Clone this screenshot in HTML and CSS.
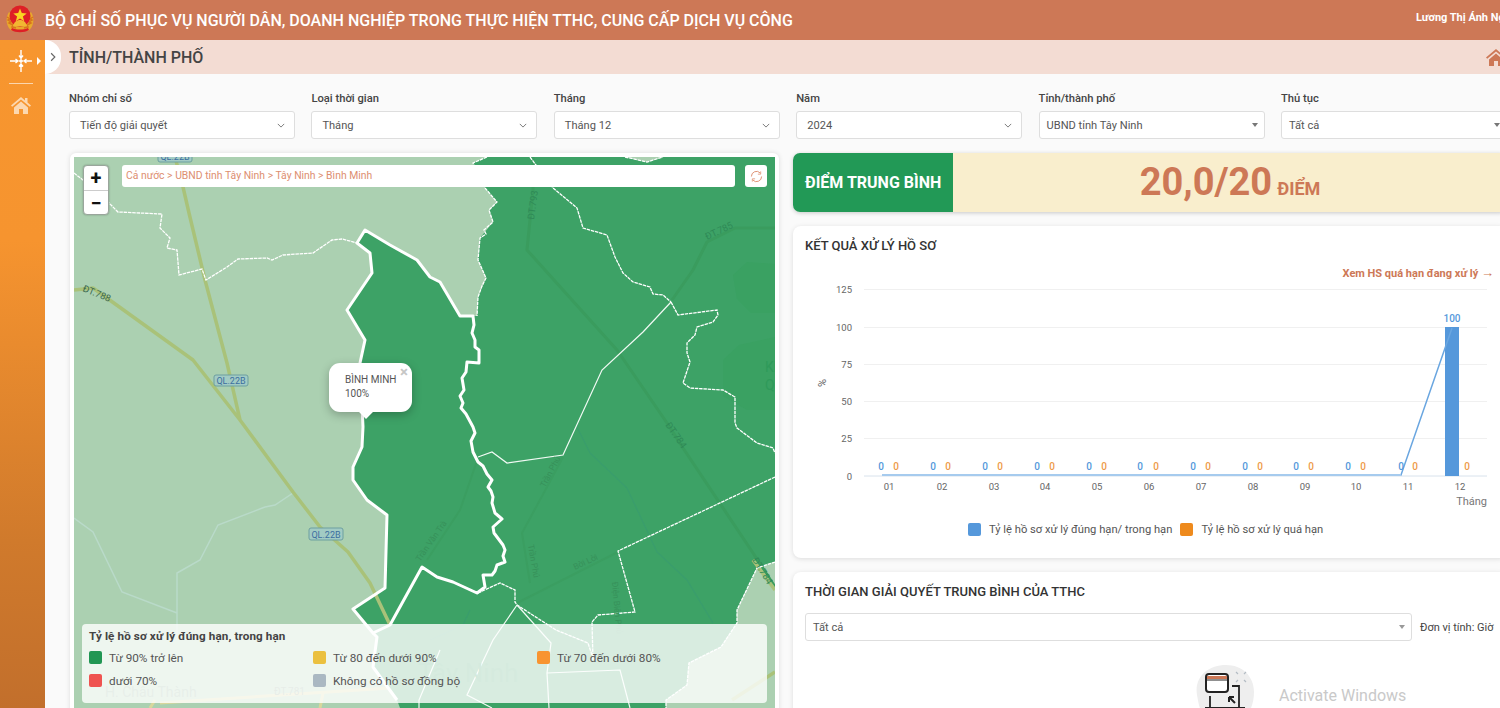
FILE: index.html
```html
<!DOCTYPE html>
<html lang="vi">
<head>
<meta charset="utf-8">
<title>Bộ chỉ số phục vụ người dân</title>
<link rel="stylesheet" href="styles.css">
</head>
<body>
<div class="app">
  <header class="topbar">
    <svg class="emblem" viewBox="0 0 32 32" width="32" height="32">
      <path d="M5 9C1 15 2 24 8 28h16c6-4 7-13 3-19l-3 3H8z" fill="#e9a92b"/>
      <path d="M3 14l3 2-2 1 3 2-2 1 4 2-1 2 4 1M29 14l-3 2 2 1-3 2 2 1-4 2 1 2-4 1" fill="none" stroke="#d8741c" stroke-width="1.5"/>
      <circle cx="16" cy="13" r="10.5" fill="#de1f26"/>
      <path d="M16 5.5l1.8 4.6 4.9.3-3.8 3.1 1.3 4.8-4.2-2.7-4.2 2.7 1.3-4.8-3.8-3.1 4.9-.3z" fill="#f9d423"/>
      <path d="M9 23c1-4 4-6 7-6s6 2 7 6z" fill="#f2b632"/>
      <path d="M7 27c5 3 13 3 18 0l-1-2c-5 2-11 2-16 0z" fill="#de1f26"/>
    </svg>
    <h1 class="app-title">BỘ CHỈ SỐ PHỤC VỤ NGƯỜI DÂN, DOANH NGHIỆP TRONG THỰC HIỆN TTHC, CUNG CẤP DỊCH VỤ CÔNG</h1>
    <div class="user">Lương Thị Ánh Nguyệt</div>
  </header>
  <div class="shell">
    <aside class="sidebar">
      <div class="side-top">
        <svg viewBox="0 0 22 22" width="22" height="22" class="move-icon">
          <path d="M11 0v8M11 14v8M0 11h8M14 11h8M11 8l-2-2.500M11 8l2-2.500M11 14l-2 2.500M11 14l2 2.500M8 11L5.500 9M8 11l-2.500 2M14 11l2.500-2M14 11l2.500 2M8.500 11h5M11 8.500v5" fill="none" stroke="#fff" stroke-width="1.400"/>
        </svg>
        <span class="side-caret"></span>
      </div>
      <div class="side-line"></div>
      <svg class="side-home" viewBox="0 0 20 17" width="20" height="17">
        <path d="M10 0l4 3.400V1h2.500v4.500L20 8.500l-1.200 1.300L10 2.400 1.200 9.800 0 8.500zM3 10.500L10 4.600l7 5.900V17h-5v-5H8v5H3z" fill="#fcd8b0"/>
      </svg>
    </aside>
    <main class="main">
      <div class="subbar">
        <div class="toggle">
          <svg viewBox="0 0 8 12" width="6" height="10"><path d="M1.500 1l5 5-5 5" fill="none" stroke="#666" stroke-width="1.500"/></svg>
        </div>
        <h2 class="page-title">TỈNH/THÀNH PHỐ</h2>
        <svg class="crumb-home" viewBox="0 0 20 17" width="20" height="17">
          <path d="M10 0l4 3.400V1h2.500v4.500L20 8.500l-1.200 1.300L10 2.400 1.200 9.800 0 8.500zM3 10.500L10 4.600l7 5.900V17h-5v-5H8v5H3z" fill="#cd7856"/>
        </svg>
      </div>

      <div class="filters">
        <div class="field"><label class="field-label">Nhóm chỉ số</label><div class="select"><span>Tiến độ giải quyết</span><svg class="chev" viewBox="0 0 10 6" width="8" height="5"><path d="M1 1l4 4 4-4" fill="none" stroke="#777" stroke-width="1.200"/></svg></div></div>
        <div class="field"><label class="field-label">Loại thời gian</label><div class="select"><span>Tháng</span><svg class="chev" viewBox="0 0 10 6" width="8" height="5"><path d="M1 1l4 4 4-4" fill="none" stroke="#777" stroke-width="1.200"/></svg></div></div>
        <div class="field"><label class="field-label">Tháng</label><div class="select"><span>Tháng 12</span><svg class="chev" viewBox="0 0 10 6" width="8" height="5"><path d="M1 1l4 4 4-4" fill="none" stroke="#777" stroke-width="1.200"/></svg></div></div>
        <div class="field"><label class="field-label">Năm</label><div class="select"><span>2024</span><svg class="chev" viewBox="0 0 10 6" width="8" height="5"><path d="M1 1l4 4 4-4" fill="none" stroke="#777" stroke-width="1.200"/></svg></div></div>
        <div class="field"><label class="field-label">Tỉnh/thành phố</label><div class="select select-tight"><span>UBND tỉnh Tây Ninh</span><i class="tri"></i></div></div>
        <div class="field"><label class="field-label">Thủ tục</label><div class="select select-tight"><span>Tất cả</span><i class="tri"></i></div></div>
      </div>

      <div class="panels">
        <section class="map-card">
          <div class="map">
            <svg class="map-svg" viewBox="74 157 701 551" width="701" height="551">
              <rect x="74" y="157" width="701" height="551" fill="#abd0b1"/>
              <path class="river-l" d="M293 493L275 505 265 507 218 525 200 560 177 573 177 640M74 518L93 532 122 592 177 613"/>
              <path class="road-pale" d="M160 703L390 688M155 700L150 708M323 693L320 708"/>
              <path id="land" fill="#3da266" d="M487 157L473 163 485 188 497 202 489 210 493 222 480 238 478 260 486 278 478 297 477 316 460 316 440 282 430 277 417 260 390 245 365 230 357 243 370 253 372 273 347 310 365 340 360 363 363 427 362 447 353 467 353 480 367 500 387 515 385 588 353 609 373 632 377 637 373 667 397 700 400 708 666 708 666 700 687 685 689 663 721 647 737 623 737 610 757 568 775 562 775 157 663 157 647 162 625 157z"/>
              <path fill="#3aa162" d="M733 275l14-13 28 2v49h-24l-14-14zM723 360l16-15 36-8v73h-28l-24-14z"/>
              <path class="road-green" d="M533 157L533 190 527 250 617 350 667 423 683 448 753 553 775 587M775 228H735L707 242 693 270 672 300"/>
              <path class="road-green thin" d="M427 560L460 510 478 458M530 583L522 533 547 487 563 457M517 603L618 552"/>
              <path class="river-g" d="M577 427L590 453 627 488 657 552 687 580 713 623M470 610L463 625 430 640"/>
              <path class="road-q" d="M175 157L183 187 189 213 205 280 227 363 240 420 293 492 320 527 348 552 370 583 390 625M74 290L93 288 193 360 240 420"/>
              <path class="road-q" d="M753 560L775 590M732 700L775 672"/>
              <path class="dash" d="M74 173L83 180 108 202 118 212 162 214 160 228 170 238 167 248 177 250 179 275 202 269 206 280 227 267 238 259 267 258 272 260 283 255 313 253 332 240 342 239 357 243"/>
              <path class="dash" d="M487 157L473 163 485 188 497 202 489 210 493 222 484 230 486 234 480 238 478 260 486 278 482 286 478 297 477 316"/>
              <path class="dash" d="M625 157L647 162 663 157M530 157L553 188 577 208 583 228 607 235 615 257 623 273 633 282 650 287 653 294 663 295 671 302"/>
              <path class="solid-thin" d="M671 302L643 332 602 370 563 455 507 463 492 452 478 457"/>
              <path class="dash" d="M671 302L678 315 717 310 718 315 713 322 697 327 695 335 687 343 687 353 690 362 683 383 690 388 723 390 735 397 735 423 737 428 757 443 773 448 775 453"/>
              <path class="dash" d="M775 477L618 551 635 612 598 615 592 622 593 660"/>
              <path class="dash" d="M478 593L500 583 515 590 515 602 517 605 556 630 588 643 592 655"/>
              <path class="solid-thin" d="M517 605L493 640 467 695 492 708M517 605L551 643 547 673 549 708M547 673L620 670 630 708M440 650L419 700V708"/>
              <path class="dash" d="M775 562L757 568 737 610 737 623 721 647 689 663 687 685 666 700 666 708"/>
              <path class="outline" d="M357 243L365 230 390 245 417 260 430 277 440 282 460 316 473 316 474 325 472 333 475 340 475 347 479 350 479 363 467 362 466 372 462 378 464 390 460 396 463 403 461 408 466 414 473 427 475 433 471 441 473 452 478 462 483 466 487 474 492 480 488 487 491 491 493 497 492 503 495 513 502 519 493 527 494 533 497 537 503 545 505 550 503 556 505 562 497 565 495 571 492 575 483 575 485 587 477 593 453 582 437 577 422 567 390 625 373 633 353 609 385 588 387 515 367 500 353 480 353 467 362 447 363 427 360 363 365 340 347 310 372 273 370 253z"/>
              <path class="outline" d="M373 633L377 637 373 667 397 700"/>
              <g class="lbl">
                <text x="82" y="291" transform="rotate(22 82 291)">ĐT.788</text>
                <text x="534" y="220" transform="rotate(-82 534 220)" class="on-green">ĐT.793</text>
                <text x="707" y="240" transform="rotate(-25 707 240)" class="on-green">ĐT.785</text>
                <text x="665" y="425" transform="rotate(55 665 425)" class="on-green">ĐT.784</text>
                <text x="752" y="560" transform="rotate(58 752 560)" class="on-green">ĐT.784</text>
                <text x="420" y="562" transform="rotate(-55 420 562)" class="small-g">Trần Văn Trà</text>
                <text x="545" y="488" transform="rotate(-62 545 488)" class="small-g">Trần Phú</text>
                <text x="528" y="545" transform="rotate(80 528 545)" class="small-g">Trần Phú</text>
                <text x="575" y="570" transform="rotate(-25 575 570)" class="small-g">Bời Lời</text>
                <text x="612" y="582" transform="rotate(85 612 582)" class="small-g">Điện Biên Phủ</text>
                <text x="765" y="372" class="big-g">Kl</text>
                <text x="765" y="390" class="big-g">Q</text>
                <text x="105" y="697" class="town">H. Châu Thành</text>
                <text x="274" y="695" class="pale">ĐT.781</text>
                <text x="418" y="682" class="big-town">Tây Ninh</text>
              </g>
              <g class="shield">
                <rect x="158" y="151" width="34" height="11" rx="2"/><text x="175" y="160">QL.22B</text>
                <rect x="214" y="375" width="34" height="11" rx="2"/><text x="231" y="384">QL.22B</text>
                <rect x="309" y="528" width="34" height="12" rx="2"/><text x="326" y="538">QL.22B</text>
              </g>
            </svg>

            <div class="zoom-ctl">
              <div class="zoom-btn">+</div>
              <div class="zoom-btn">−</div>
            </div>
            <div class="map-crumb">Cả nước &gt; UBND tỉnh Tây Ninh &gt; Tây Ninh &gt; Bình Minh</div>
            <div class="map-refresh">
              <svg viewBox="0 0 14 14" width="13" height="13"><path d="M1.500 7a5.500 5.500 0 0 1 9.500-3.800M12.500 7A5.500 5.500 0 0 1 3 10.800" fill="none" stroke="#dc8a6a" stroke-width="1"/><path d="M11.500 1.500v3h-3M2.500 12.500v-3h3" fill="none" stroke="#dc8a6a" stroke-width=".8"/></svg>
            </div>
            <div class="popup">
              <span class="popup-x">×</span>
              <div>BÌNH MINH</div>
              <div>100%</div>
            </div>
            <div class="legend">
              <div class="legend-title">Tỷ lệ hồ sơ xử lý đúng hạn, trong hạn</div>
              <div class="legend-grid">
                <div class="legend-item"><i class="sw sw-green"></i>Từ 90% trở lên</div>
                <div class="legend-item"><i class="sw sw-yellow"></i>Từ 80 đến dưới 90%</div>
                <div class="legend-item"><i class="sw sw-orange"></i>Từ 70 đến dưới 80%</div>
                <div class="legend-item"><i class="sw sw-red"></i>dưới 70%</div>
                <div class="legend-item"><i class="sw sw-grey"></i>Không có hồ sơ đồng bộ</div>
              </div>
            </div>
          </div>
        </section>

        <div class="right-col">
          <div class="score">
            <div class="score-label">ĐIỂM TRUNG BÌNH</div>
            <div class="score-value"><strong>20,0/20</strong><span>ĐIỂM</span></div>
          </div>

          <section class="card chart-card">
            <h3 class="card-title">KẾT QUẢ XỬ LÝ HỒ SƠ</h3>
            <a class="card-link">Xem HS quá hạn đang xử lý <span class="link-arrow">→</span></a>
            <svg class="chart" viewBox="793 280 714 235" width="714" height="235">
              <g class="grid">
                <path d="M864 289.500H1487M864 327.500H1487M864 364.500H1487M864 401.500H1487M864 438.500H1487"/>
                <path class="axis" d="M864 476H1487"/>
              </g>
              <g class="ylab">
                <text x="852" y="293">125</text><text x="852" y="331">100</text><text x="852" y="368">75</text>
                <text x="852" y="405">50</text><text x="852" y="442">25</text><text x="852" y="480">0</text>
              </g>
              <text class="unit" x="826" y="383" transform="rotate(-90 826 383)">%</text>
              <g class="xlab">
                <text x="889" y="490">01</text><text x="942" y="490">02</text><text x="994" y="490">03</text><text x="1045" y="490">04</text>
                <text x="1097" y="490">05</text><text x="1149" y="490">06</text><text x="1201" y="490">07</text><text x="1253" y="490">08</text>
                <text x="1305" y="490">09</text><text x="1356" y="490">10</text><text x="1408" y="490">11</text><text x="1460" y="490">12</text>
              </g>
              <text class="xname" x="1487" y="505">Tháng</text>
              <rect x="1445" y="327" width="14" height="149" fill="#5598db"/>
              <path d="M882 475H1401L1452 328" fill="none" stroke="#6aa6e0" stroke-width="1.500"/>
              <path d="M882 475H1401" fill="none" stroke="#a6cbee" stroke-width="2"/>
              <g class="blue-val">
                <text x="881" y="470">0</text><text x="933" y="470">0</text><text x="985" y="470">0</text><text x="1037" y="470">0</text>
                <text x="1089" y="470">0</text><text x="1140" y="470">0</text><text x="1193" y="470">0</text><text x="1245" y="470">0</text>
                <text x="1296" y="470">0</text><text x="1348" y="470">0</text><text x="1401" y="470">0</text><text x="1452" y="322">100</text>
              </g>
              <g class="orange-val">
                <text x="896" y="470">0</text><text x="948" y="470">0</text><text x="1000" y="470">0</text><text x="1052" y="470">0</text>
                <text x="1104" y="470">0</text><text x="1156" y="470">0</text><text x="1208" y="470">0</text><text x="1260" y="470">0</text>
                <text x="1311" y="470">0</text><text x="1363" y="470">0</text><text x="1415" y="470">0</text><text x="1467" y="470">0</text>
              </g>
            </svg>
            <div class="chart-legend">
              <span class="cl-item"><i class="cl-sw cl-blue"></i>Tỷ lệ hồ sơ xử lý đúng hạn/ trong hạn</span>
              <span class="cl-item"><i class="cl-sw cl-orange"></i>Tỷ lệ hồ sơ xử lý quá hạn</span>
            </div>
          </section>

          <section class="card time-card">
            <h3 class="card-title">THỜI GIAN GIẢI QUYẾT TRUNG BÌNH CỦA TTHC</h3>
            <div class="time-row">
              <div class="select select-wide"><span>Tất cả</span><i class="tri tri-pale"></i></div>
              <span class="unit-note">Đơn vị tính: Giờ</span>
            </div>
            <div class="empty">
              <svg viewBox="0 0 60 60" width="60" height="60">
                <path d="M3 30C0 12 14 0 32 0c16 0 28 11 28 27S52 60 30 60 6 46 3 30z" fill="#eeeeee"/>
                <path d="M42 7l2 2M52 7l-2 2M42 17l2-2M52 17l-2-2" stroke="#b4bcc4" stroke-width="1.200"/>
                <rect x="12" y="9" width="22" height="18" rx="3" fill="#fff" stroke="#222" stroke-width="2"/>
                <rect x="13" y="11" width="20" height="3" fill="#cd7856"/>
                <path d="M13 15h20" stroke="#222" stroke-width="1"/>
                <path d="M38 21h7v24M16 31v14M11 43h40" fill="none" stroke="#222" stroke-width="1.800"/>
                <path d="M35 32l6 6M35 32v5M35 32h5" fill="none" stroke="#222" stroke-width="2"/>
              </svg>
            </div>
          </section>
        </div>
      </div>
    </main>
  </div>
  <div class="watermark">Activate Windows</div>
</div>
</body>
</html>
```

FILE: styles.css
```css
* { box-sizing: border-box; }
html, body { margin: 0; padding: 0; height: 100%; }
body { font-family: Roboto, "Noto Sans", sans-serif; color: #444; background: #fafafa; overflow: hidden; }

.app { position: relative; width: 1500px; height: 708px; overflow: hidden; display: flex; flex-direction: column; }

/* top bar */
.topbar { height: 40px; flex: none; background: #cd7856; display: flex; align-items: center; padding-left: 4px; color: #fff; }
.emblem { flex: none; margin-top: -2px; }
.app-title { margin: 0 0 0 9px; font-size: 16px; font-weight: 500; white-space: nowrap; }
.user { margin-left: auto; width: 84px; flex: none; font-size: 11px; font-weight: 700; white-space: nowrap; margin-top: -5px; }

.shell { flex: 1; display: flex; min-height: 0; }

/* sidebar */
.sidebar { width: 45px; flex: none; background: linear-gradient(#f7962f 0%, #f6942f 30%, #d07a2c 75%, #c26f2c 100%); display: flex; flex-direction: column; align-items: flex-start; }
.side-top { display: flex; align-items: center; height: 22px; margin: 10px 0 0 10px; }
.move-icon { flex: none; }
.side-caret { width: 0; height: 0; margin-left: 5px; border-left: 4px solid #fff; border-top: 4px solid transparent; border-bottom: 4px solid transparent; }
.side-line { width: 24px; height: 1px; background: #fbd6ae; margin: 11px 0 0 9px; }
.side-home { margin: 13px 0 0 11px; }

/* main */
.main { flex: 1; min-width: 0; display: flex; flex-direction: column; background: #fafafa; }
.subbar { height: 34px; flex: none; background: #f3dcd3; display: flex; align-items: center; }
.toggle { width: 16px; height: 34px; flex: none; background: #fff; border-radius: 0 17px 17px 0; display: flex; align-items: center; justify-content: center; padding-right: 1px; }
.page-title { margin: 0 0 0 8px; font-size: 16px; font-weight: 500; color: #444; white-space: nowrap; }
.crumb-home { margin-left: auto; margin-right: -6px; flex: none; }

/* filters */
.filters { display: grid; grid-template-columns: repeat(6, 226px); column-gap: 16.4px; padding: 17px 0 0 24px; width: 1462px; flex: none; }
.field { display: flex; flex-direction: column; gap: 5px; }
.field-label { font-size: 11.2px; font-weight: 500; line-height: 15px; color: #444; white-space: nowrap; }
.select { height: 28px; background: #fff; border: 1px solid #dedede; border-radius: 3px; display: flex; align-items: center; justify-content: space-between; padding: 0 10px; font-size: 11.1px; color: #555; }
.select-tight { padding: 0 7px; }
.chev { flex: none; margin-right: -1px; }
.tri { width: 0; height: 0; flex: none; border-left: 3.500px solid transparent; border-right: 3.500px solid transparent; border-top: 4px solid #777; margin-right: -1px; }
.tri-pale { border-top-color: #999; }

/* panels */
.panels { display: flex; gap: 14px; padding: 14px 0 0 25px; width: 1462px; flex: 1; min-height: 0; align-items: flex-start; }

.map-card { width: 709px; flex: none; height: 570px; background: #fff; padding: 4px; border-radius: 6px; box-shadow: 0 0 5px rgba(0,0,0,.12); }
.map { position: relative; width: 701px; height: 551px; overflow: hidden; }
.map-svg { display: block; }

.river-l { fill: none; stroke: #b9dac9; stroke-width: 1.500; }
.road-pale { fill: none; stroke: #d8d79c; stroke-width: 3; }
.road-q { fill: none; stroke: #a9c279; stroke-width: 3.500; stroke-linejoin: round; }
.road-green { fill: none; stroke: #3a9c5e; stroke-width: 3; stroke-linejoin: round; }
.road-green.thin { stroke: #3b9e61; stroke-width: 2; }
.river-g { fill: none; stroke: #3a9d6d; stroke-width: 1.200; }
.dash { fill: none; stroke: #fff; stroke-width: 1.300; stroke-dasharray: 3.500 .8; }
.solid-thin { fill: none; stroke: #f1faf4; stroke-width: 1.200; }
.outline { fill: none; stroke: #fff; stroke-width: 3; stroke-linejoin: round; }

.lbl text { font-family: Roboto, sans-serif; font-size: 9.500px; fill: #3c6a50; }
.lbl .on-green { fill: #2f8a57; }
.lbl .small-g { fill: #37915a; font-size: 8.500px; }
.lbl .big-g { fill: #2f9a5a; font-size: 14px; }
.lbl .town { fill: #88ad92; font-size: 14px; }
.lbl .pale { fill: #86a58c; font-size: 10px; }
.lbl .big-town { fill: #2f9659; font-size: 26px; }
.shield rect { fill: #a2cbc4; stroke: #6d9fa0; stroke-width: 1; }
.shield text { font-family: Roboto, sans-serif; font-size: 9px; fill: #3c6fa0; text-anchor: middle; }

.zoom-ctl { position: absolute; left: 9px; top: 8px; width: 26px; background: #fff; border: 1px solid #9aa59c; border-radius: 4px; box-shadow: 0 0 2px rgba(0,0,0,.3); }
.zoom-btn { height: 24px; display: flex; align-items: center; justify-content: center; font-size: 20px; font-weight: 700; color: #111; line-height: 1; }
.zoom-btn + .zoom-btn { border-top: 1px solid #ccc; }

.map-crumb { position: absolute; left: 48px; top: 8px; width: 613px; height: 22px; background: #fff; border-radius: 3px; padding-left: 4px; line-height: 21px; font-size: 10.4px; color: #dd8e70; white-space: nowrap; }
.map-refresh { position: absolute; left: 671px; top: 8px; width: 22px; height: 22px; background: #fff; border-radius: 3px; display: flex; align-items: center; justify-content: center; }

.popup { position: absolute; left: 255px; top: 206px; width: 83px; height: 49px; background: #fff; border-radius: 11px; padding: 10px 0 0 16px; font-size: 10px; line-height: 14px; color: #555; box-shadow: 0 3px 10px rgba(0,0,0,.25); }
.popup::after { content: ""; position: absolute; left: 30px; bottom: -7px; width: 14px; height: 14px; background: #fff; transform: rotate(45deg) scale(.7); }
.popup-x { position: absolute; right: 4px; top: 2px; font-size: 15px; line-height: 14px; font-weight: 700; color: #c6c6c6; }

.legend { position: absolute; left: 8px; top: 467px; width: 685px; height: 79px; background: rgba(255,255,255,.8); border-radius: 4px; padding: 5px 7px; color: #555; }
.legend-title { font-size: 11.7px; line-height: 14px; font-weight: 700; color: #444; letter-spacing: .1px; white-space: nowrap; }
.legend-grid { display: grid; grid-template-columns: repeat(3, 224px); row-gap: 10px; margin-top: 8px; }
.legend-item { display: flex; align-items: center; gap: 7px; height: 13px; font-size: 11.750px; white-space: nowrap; color: #555; }
.sw { width: 13px; height: 13px; border-radius: 2px; flex: none; }
.sw-green { background: #219653; }
.sw-yellow { background: #ebc03f; }
.sw-orange { background: #f89430; }
.sw-red { background: #ef5350; }
.sw-grey { background: #aab8c2; }

/* right */
.right-col { width: 714px; flex: none; display: flex; flex-direction: column; gap: 14px; }
.score { height: 59px; flex: none; display: flex; border-radius: 7px; overflow: hidden; box-shadow: 0 1px 4px rgba(0,0,0,.2); }
.score-label { width: 160px; flex: none; background: #229956; color: #fff; font-size: 16px; font-weight: 700; display: flex; align-items: center; padding-left: 12px; white-space: nowrap; }
.score-value { flex: 1; background: #f9eecd; color: #cd7856; display: flex; align-items: baseline; justify-content: center; gap: 5px; line-height: 58px; }
.score-value strong { font-size: 38px; font-weight: 700; }
.score-value span { font-size: 18px; font-weight: 700; }

.card { background: #fff; border-radius: 8px; box-shadow: 0 1px 5px rgba(0,0,0,.12); padding: 12px 12px 0; flex: none; }
.card-title { margin: 0; font-size: 13px; line-height: 16px; font-weight: 500; color: #333; white-space: nowrap; }
.chart-card { height: 332px; position: relative; }
.card-link { position: absolute; right: 13px; top: 40px; font-size: 11px; line-height: 14px; font-weight: 700; color: #cd7856; white-space: nowrap; }
.link-arrow { font-size: 13px; font-weight: 400; }
.chart { display: block; position: absolute; left: 0; top: 54px; }
.grid path { fill: none; stroke: #f0f0f0; stroke-width: 1; }
.grid .axis { stroke: #d8e2ec; }
.ylab text { font-size: 9.500px; fill: #666; text-anchor: end; }
.xlab text { font-size: 9.500px; fill: #666; text-anchor: middle; }
.unit { font-size: 11px; fill: #666; text-anchor: middle; }
.xname { font-size: 11px; fill: #777; text-anchor: end; }
.blue-val text { font-size: 10px; fill: #5598db; text-anchor: middle; font-weight: 500; }
.orange-val text { font-size: 10px; fill: #ee9a4a; text-anchor: middle; font-weight: 500; }

.chart-legend { position: absolute; left: 175px; top: 297px; display: flex; gap: 8px; font-size: 11.200px; line-height: 13px; color: #555; white-space: nowrap; }
.cl-item { display: flex; align-items: center; gap: 8px; }
.cl-sw { width: 13px; height: 13px; border-radius: 2px; flex: none; }
.cl-blue { background: #5598db; }
.cl-orange { background: #ee8a1d; }

.time-card { height: 200px; }
.time-row { display: flex; align-items: center; gap: 8px; margin-top: 13px; }
.select-wide { width: 607px; flex: none; padding: 0 7px; }
.unit-note { font-size: 11px; color: #444; white-space: nowrap; }
.empty { margin: 24px 0 0 389px; }

.watermark { position: absolute; left: 1279px; top: 687px; font-size: 16px; line-height: 18px; color: #c9c9c9; white-space: nowrap; }
```
